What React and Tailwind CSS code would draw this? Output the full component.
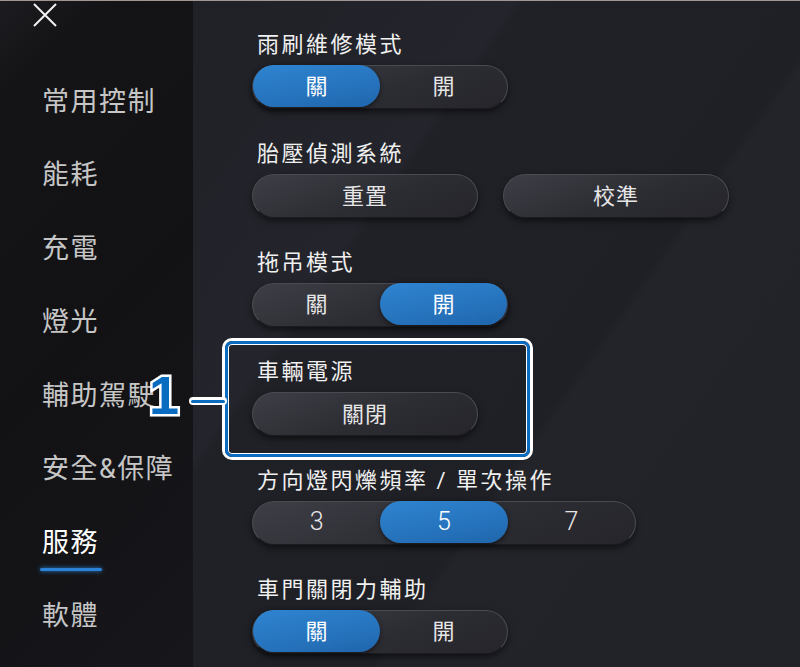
import React, { useState } from "react";

const FONT = { fontFamily: '"Roboto", "Noto Sans CJK TC", sans-serif' };

const menu = ["常用控制", "能耗", "充電", "燈光", "輔助駕駛", "安全&保障", "服務", "軟體"];

const darkPill =
    "bg-[linear-gradient(160deg,#3e3e46_0%,#2c2c33_55%,#25252b_100%)] border border-[#4a4a52] border-b-[#1c1c20] shadow-[0_3px_6px_rgba(0,0,0,0.55)]";
const bluePill =
    "bg-[linear-gradient(170deg,#2f84d0_0%,#2673bd_60%,#1f66ac_100%)] shadow-[0_2px_5px_rgba(0,0,0,0.5)]";

const Segmented = ({ options, active, width, big }) => (
    <div className={`flex h-[44px] rounded-full ${darkPill}`} style={{ width }}>
        {options.map((opt, i) => (
            <div
                key={opt}
                className={`flex-1 h-full -my-px flex items-center justify-center rounded-full text-[#e6e6e6] ${
                    big ? "text-[25px] font-light" : "text-[22px]"
                } ${i === active ? bluePill + " text-white" : ""}`}
            >
                {opt}
            </div>
        ))}
    </div>
);

const Button = ({ label }) => (
    <div className={`w-[226px] h-[44px] rounded-full flex items-center justify-center text-[22px] text-[#e6e6e6] tracking-[1px] ${darkPill}`}>
        {label}
    </div>
);

const Section = ({ title, children }) => (
    <div className="flex flex-col gap-[6px] h-[78px]">
        <div className="h-[28px] leading-[28px] pl-[5px] text-[22px] text-[#f0f0f0] tracking-[2.5px]">{title}</div>
        {children}
    </div>
);

export default function App() {
    const [current] = useState("服務");

    return (
        <div
            className="relative w-[800px] h-[667px] overflow-hidden flex bg-[#202127] border-t border-[#a29592]"
            style={FONT}
        >
            {/* sidebar */}
            <div className="w-[193px] h-full shrink-0 bg-[linear-gradient(135deg,#1c1c20_0%,#141417_12%,#121215_50%,#17171b_100%)] relative">
                <svg className="absolute left-[33px] top-[2px]" width="24" height="24" viewBox="0 0 24 24">
                    <path d="M1 1 L23 23 M23 1 L1 23" stroke="#f2f2f2" strokeWidth="2" />
                </svg>
                <div className="flex flex-col pt-[64px]">
                    {menu.map((m) => (
                        <div key={m} className="relative h-[73.5px] flex items-center pl-[42px]">
                            <span
                                className={`text-[27px] tracking-[1.5px] ${
                                    current === m ? "text-white" : "text-[#c6c6c6]"
                                }`}
                            >
                                {m}
                            </span>
                            {current === m && (
                                <div className="absolute left-[40px] top-[62px] w-[62px] h-[3px] rounded-full bg-[#2b82d6] shadow-[0_0_4px_#2b82d6]" />
                            )}
                        </div>
                    ))}
                </div>
            </div>

            {/* main */}
            <div className="flex-1 h-full bg-[linear-gradient(125deg,#202127_0%,#24252c_30%,#202127_31%,#1f2026_60%,#23242a_61%,#222329_100%)]">
                <div className="flex flex-col gap-[31px] pt-[30px] pl-[59px]">
                    <Section title="雨刷維修模式">
                        <Segmented options={["關", "開"]} active={0} width={256} />
                    </Section>
                    <Section title="胎壓偵測系統">
                        <div className="flex gap-[25px]">
                            <Button label="重置" />
                            <Button label="校準" />
                        </div>
                    </Section>
                    <Section title="拖吊模式">
                        <Segmented options={["關", "開"]} active={1} width={256} />
                    </Section>
                    <div className="relative">
                        <Section title="車輛電源">
                            <Button label="關閉" />
                        </Section>
                        <div className="absolute left-[-30px] top-[-20px] w-[311px] h-[122px] rounded-[10px] border-[3px] border-white">
                            <div className="w-full h-full rounded-[7px] border-[3px] border-[#0a6cc0] shadow-[inset_0_0_0_1px_#ffffff]" />
                        </div>
                    </div>
                    <Section title="方向燈閃爍頻率 / 單次操作">
                        <Segmented options={["3", "5", "7"]} active={1} width={384} big />
                    </Section>
                    <Section title="車門關閉力輔助">
                        <Segmented options={["關", "開"]} active={0} width={256} />
                    </Section>
                </div>
            </div>

            {/* callout */}
            <div className="absolute left-[189px] top-[396px] w-[38px] h-[8px] rounded-full bg-white flex items-center px-[2px]">
                <div className="w-full h-[3px] rounded-full bg-[#0a6cc0]" />
            </div>
            <div
                className="absolute left-[149px] top-[364px] text-[54px] leading-[60px] font-bold text-[#0a6cc0] [-webkit-text-stroke:5px_white] [paint-order:stroke_fill]"
                style={{ fontFamily: '"Liberation Sans", sans-serif' }}
            >
                1
            </div>
        </div>
    );
}
